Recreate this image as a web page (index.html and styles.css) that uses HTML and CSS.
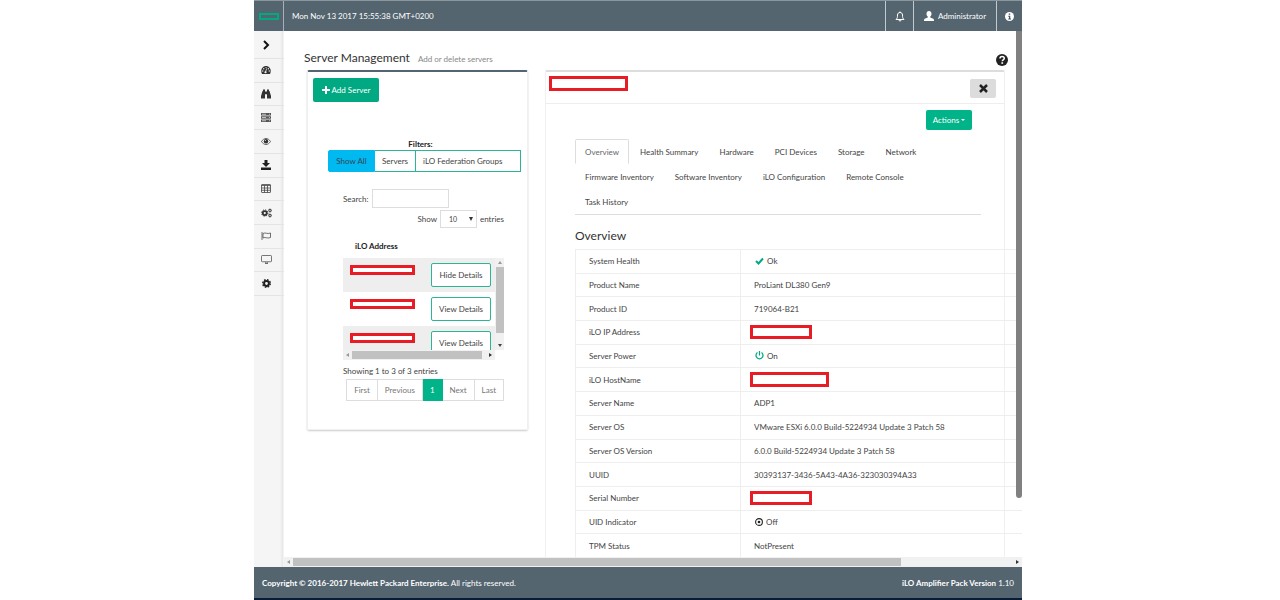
FILE: index.html
```html
<!DOCTYPE html>
<html lang="en">
  <head>
    <meta charset="UTF-8" />
    <title>iLO Amplifier Pack</title>
    <link rel="stylesheet" href="styles.css" />
  </head>
  <body>
    <div class="app">
      <header class="topbar">
        <a class="brand" href="#" aria-label="Home"><span class="brand-mark"></span></a>
        <span class="clock">Mon Nov 13 2017 15:55:38 GMT+0200</span>
        <button class="top-item" aria-label="Notifications">
          <svg width="10" height="11" viewBox="0 0 20 22" fill="none" stroke="currentColor" stroke-width="2">
            <path d="M2 17c3-3 3-5 3-9 0-3 2-5 5-5s5 2 5 5c0 4 0 6 3 9z" />
            <path d="M10 3V1M8 18c0 3 4 3 4 0" />
          </svg>
        </button>
        <button class="top-item top-user">
          <svg width="10" height="10" viewBox="0 0 20 20" fill="currentColor">
            <path d="M10 0c3.200 0 5 2.400 5 5.500 0 2.500-1 4.500-2.500 5.700V13l6 2.500c1 .5 1.500 1.500 1.500 4.500H0c0-3 .5-4 1.500-4.500l6-2.500v-1.800C6 10 5 8 5 5.500 5 2.400 6.800 0 10 0z" />
          </svg>
          Administrator
        </button>
        <button class="top-item top-info" aria-label="Info">
          <svg width="9" height="9" viewBox="0 0 18 18">
            <circle cx="9" cy="9" r="9" fill="#fff" />
            <path d="M7.500 3h3v2.500h-3zM6.500 7.500h4V13H12v2H6.500v-2H8V9.500H6.500z" fill="#425563" />
          </svg>
        </button>
      </header>

      <div class="body">
        <nav class="sidebar">
          <a href="#" aria-label="Expand">
            <svg width="8" height="10" viewBox="0 0 16 20" fill="none" stroke="#111" stroke-width="4"><path d="M4 2l8 8-8 8" /></svg>
          </a>
          <a href="#" aria-label="Dashboard">
            <svg width="10" height="8" viewBox="0 0 20 16">
              <path d="M2 16C-2 8 3 0 10 0s12 8 8 16z" fill="#333" />
              <path d="M9 12l2.500-7" stroke="#f5f5f5" stroke-width="1.500" />
              <g fill="#f5f5f5">
                <circle cx="3.500" cy="10" r="1.300" /><circle cx="5.500" cy="5.500" r="1.300" /><circle cx="10" cy="3" r="1.200" />
                <circle cx="14.800" cy="5.500" r="1.300" /><circle cx="16.500" cy="10" r="1.300" /><circle cx="9" cy="12.500" r="2.200" />
              </g>
            </svg>
          </a>
          <a href="#" aria-label="Discovery">
            <svg width="10" height="10" viewBox="0 0 20 20" fill="#333">
              <path d="M4 1h4v3h1v7H8v8H0v-5L3 4h1zM12 1h4v3h1l3 10v5h-8v-8h-1V4h1z" /><path d="M8 6h4v4H8z" />
            </svg>
          </a>
          <a href="#" aria-label="Servers">
            <svg width="10" height="9" viewBox="0 0 20 18" fill="#555">
              <path d="M0 0h20v5H0zM0 6.500h20v5H0zM0 13h20v5H0z" />
              <path d="M2 2.500h8M2 9h8M2 15.500h8M16 2.500h2M16 9h2M16 15.500h2" stroke="#eee" stroke-width="1.400" />
            </svg>
          </a>
          <a href="#" aria-label="Monitoring">
            <svg width="10" height="7" viewBox="0 0 20 14">
              <path d="M1 7c5-8 13-8 18 0-5 8-13 8-18 0z" fill="none" stroke="#444" stroke-width="1.600" />
              <circle cx="10" cy="6.500" r="4.400" fill="#333" /><circle cx="8.800" cy="5" r="1.200" fill="#ddd" />
            </svg>
          </a>
          <a href="#" aria-label="Downloads">
            <svg width="10" height="10" viewBox="0 0 20 20" fill="#222">
              <path d="M7 0h6v6h5l-8 8-8-8h5z" /><path d="M0 15h20v5H0z" />
            </svg>
          </a>
          <a href="#" aria-label="Reports">
            <svg width="10" height="9" viewBox="0 0 20 18" fill="none" stroke="#444" stroke-width="1.600">
              <rect x="1" y="1" width="18" height="16" rx="1" /><path d="M1 3h18M1 8h18M1 12.500h18M7 3v14M13 3v14" />
            </svg>
          </a>
          <a href="#" aria-label="Configuration">
            <svg width="11" height="10" viewBox="0 0 22 20" fill="none" stroke="#333">
              <circle cx="7.500" cy="10" r="4" stroke-width="3.500" /><circle cx="7.500" cy="10" r="6.300" stroke-width="2" stroke-dasharray="2.500 2.450" />
              <circle cx="18" cy="5" r="2.200" stroke-width="2" /><circle cx="18" cy="5" r="3.600" stroke-width="1" stroke-dasharray="1.500 1.300" />
              <circle cx="18" cy="15" r="2.200" stroke-width="2" /><circle cx="18" cy="15" r="3.600" stroke-width="1" stroke-dasharray="1.500 1.300" />
            </svg>
          </a>
          <a href="#" aria-label="Alerts">
            <svg width="10" height="8" viewBox="0 0 20 16" fill="none" stroke="#444" stroke-width="1.500">
              <path d="M2 0v16M4 3c5-3 8 2 15-1v9c-7 3-10-2-15 1z" />
            </svg>
          </a>
          <a href="#" aria-label="Console">
            <svg width="11" height="9" viewBox="0 0 22 18" fill="none" stroke="#555" stroke-width="1.600">
              <rect x="1" y="1" width="20" height="12.500" rx="1.500" /><path d="M8 17h6M9.500 14v3M12.500 14v3" />
            </svg>
          </a>
          <a href="#" aria-label="Settings">
            <svg width="9" height="9" viewBox="0 0 18 18" fill="none" stroke="#222">
              <circle cx="9" cy="9" r="4.800" stroke-width="4" /><circle cx="9" cy="9" r="7.500" stroke-width="3" stroke-dasharray="3.200 2.690" />
            </svg>
          </a>
        </nav>

        <main class="main">
          <div class="page-head">
            <h1>Server Management</h1>
            <small>Add or delete servers</small>
            <button class="help" aria-label="Help">
              <svg width="12" height="12" viewBox="0 0 24 24">
                <circle cx="12" cy="12" r="12" fill="#222" />
                <path d="M8 9c0-5.500 8.500-5 8.500-.5 0 3.500-4 3-4 6" fill="none" stroke="#fff" stroke-width="3" />
                <path d="M10.800 16.500h3.400v3.200h-3.400z" fill="#fff" />
              </svg>
            </button>
          </div>

          <div class="panels">
            <section class="panel panel-list">
              <button class="btn-green btn-add">
                <svg width="8" height="8" viewBox="0 0 16 16" fill="#fff"><path d="M6 0h4v6h6v4h-6v6H6v-6H0V6h6z" /></svg>
                Add Server
              </button>

              <div class="filters">
                <b>Filters:</b>
                <div class="filter-group">
                  <button class="active">Show All</button>
                  <button>Servers</button>
                  <button>iLO Federation Groups</button>
                </div>
              </div>

              <div class="list">
                <div class="search">
                  <label for="search">Search:</label>
                  <input id="search" type="text" />
                </div>
                <div class="length">
                  <label for="length">Show</label>
                  <span class="select">
                    <select id="length">
                      <option>10</option>
                      <option>25</option>
                    </select>
                  </span>
                  <span>entries</span>
                </div>

                <h2 class="list-head">iLO Address</h2>
                <div class="scroll-box">
                  <div class="rows">
                    <div class="row"><span class="mask mask-thin"></span><button>Hide Details</button></div>
                    <div class="row"><span class="mask mask-thin"></span><button>View Details</button></div>
                    <div class="row"><span class="mask mask-thin"></span><button>View Details</button></div>
                  </div>
                  <div class="vbar"><i class="up"></i><span class="thumb"></span><i class="down"></i></div>
                  <div class="hbar"><i class="left"></i><span class="thumb"></span><i class="right"></i></div>
                </div>

                <p class="info">Showing 1 to 3 of 3 entries</p>
                <div class="pager">
                  <a href="#">First</a>
                  <a href="#">Previous</a>
                  <a href="#" class="active">1</a>
                  <a href="#">Next</a>
                  <a href="#">Last</a>
                </div>
              </div>
            </section>

            <section class="panel panel-detail">
              <div class="detail-head">
                <span class="mask mask-lg"></span>
                <button class="close" aria-label="Close">
                  <svg width="9" height="9" viewBox="0 0 18 18" stroke="#222" stroke-width="5"><path d="M2 2l14 14M16 2L2 16" /></svg>
                </button>
              </div>
              <div class="detail-body">
                <button class="btn-green btn-actions">Actions<i class="caret"></i></button>
                <nav class="tabs">
                  <a href="#" class="active">Overview</a>
                  <a href="#">Health Summary</a>
                  <a href="#">Hardware</a>
                  <a href="#">PCI Devices</a>
                  <a href="#">Storage</a>
                  <a href="#">Network</a>
                  <a href="#">Firmware Inventory</a>
                  <a href="#">Software Inventory</a>
                  <a href="#">iLO Configuration</a>
                  <a href="#">Remote Console</a>
                  <a href="#">Task History</a>
                </nav>
                <h2>Overview</h2>
                <table class="overview">
                  <tr>
                    <th>System Health</th>
                    <td>
                      <svg class="icon" width="9" height="8" viewBox="0 0 18 16" fill="none" stroke="#01a982" stroke-width="4"><path d="M2 8l5 5 9-10" /></svg>
                      Ok
                    </td>
                  </tr>
                  <tr><th>Product Name</th><td>ProLiant DL380 Gen9</td></tr>
                  <tr><th>Product ID</th><td>719064-B21</td></tr>
                  <tr><th>iLO IP Address</th><td class="masked"><span class="mask mask-md"></span></td></tr>
                  <tr>
                    <th>Server Power</th>
                    <td>
                      <svg class="icon" width="9" height="9" viewBox="0 0 18 18" fill="none" stroke="#01a982" stroke-width="2.500"><path d="M5 3a7 7 0 1 0 8 0M9 0v9" /></svg>
                      On
                    </td>
                  </tr>
                  <tr><th>iLO HostName</th><td class="masked"><span class="mask mask-lg"></span></td></tr>
                  <tr><th>Server Name</th><td>ADP1</td></tr>
                  <tr><th>Server OS</th><td>VMware ESXi 6.0.0 Build-5224934 Update 3 Patch 58</td></tr>
                  <tr><th>Server OS Version</th><td>6.0.0 Build-5224934 Update 3 Patch 58</td></tr>
                  <tr><th>UUID</th><td>30393137-3436-5A43-4A36-323030394A33</td></tr>
                  <tr><th>Serial Number</th><td class="masked"><span class="mask mask-md"></span></td></tr>
                  <tr>
                    <th>UID Indicator</th>
                    <td>
                      <svg class="icon" width="8" height="8" viewBox="0 0 16 16"><circle cx="8" cy="8" r="6.800" fill="none" stroke="#222" stroke-width="2.200" /><circle cx="8" cy="8" r="2.600" fill="#222" /></svg>
                      Off
                    </td>
                  </tr>
                  <tr><th>TPM Status</th><td>NotPresent</td></tr>
                </table>
              </div>
            </section>
          </div>

          <div class="page-vbar"></div>
          <div class="hbar page-hbar"><i class="left"></i><span class="thumb"></span><i class="right"></i></div>
        </main>
      </div>

      <footer class="footer">
        <span><b>Copyright © 2016-2017 Hewlett Packard Enterprise.</b> All rights reserved.</span>
        <span><b>iLO Amplifier Pack Version</b> 1.10</span>
      </footer>
    </div>
  </body>
</html>
```
FILE: styles.css
```css
* {
  box-sizing: border-box;
}
body {
  margin: 0;
  padding-right: 4px;
  background: #fff;
  color: #444;
  font-family: Lato, "Liberation Sans", sans-serif;
  font-size: 8px;
  line-height: 12px;
}
button,
input,
select {
  font: inherit;
  color: inherit;
  margin: 0;
}
button {
  padding: 0;
  border: 0;
  background: none;
  white-space: nowrap;
  cursor: pointer;
}
a {
  color: inherit;
  text-decoration: none;
}
svg {
  display: block;
  flex: none;
}
h1,
h2,
p {
  margin: 0;
  font-weight: normal;
}

.app {
  width: 60vw;
  height: 100vh;
  margin: 0 auto;
  display: flex;
  flex-direction: column;
  border-bottom: 2px solid #0a1c35;
}

/* top bar */
.topbar {
  display: flex;
  align-items: stretch;
  height: 31px;
  flex: none;
  background: #546570;
  border-top: 1px solid #8b979f;
  color: #fff;
}
.brand {
  width: 30px;
  display: flex;
  align-items: center;
  justify-content: center;
  border-right: 1px solid #a5b0b7;
}
.brand-mark {
  width: 20px;
  height: 7px;
  border: 2px solid #01a982;
}
.clock {
  flex: 1;
  align-self: center;
  padding-left: 8px;
}
.top-item {
  display: flex;
  align-items: center;
  justify-content: center;
  gap: 4px;
  width: 28px;
  border-left: 1px solid #c3cacf;
}
.top-user {
  width: 83px;
}
.top-info {
  width: 26px;
}

.body {
  flex: 1;
  min-height: 0;
  display: flex;
}

/* side icons */
.sidebar {
  display: grid;
  grid-template-rows: 28px repeat(10, 1fr);
  width: 30px;
  height: 265px;
  flex: none;
}
.body {
  background: linear-gradient(to right, #f5f5f5 26px, #e6e6e6 29px, #fff 30px);
}
.sidebar a {
  padding-right: 6px;
  display: flex;
  align-items: center;
  justify-content: center;
  border-bottom: 1px solid #e4e4e4;
}

.main {
  flex: 1;
  min-width: 0;
  position: relative;
  overflow: hidden;
}
.page-head {
  display: flex;
  align-items: center;
  gap: 8px;
  height: 39px;
  padding: 14px 14px 0 20px;
}
.page-head h1 {
  font-size: 12px;
  line-height: 16px;
  color: #333;
}
.page-head small {
  font-size: 8px;
  color: #888;
  padding-top: 3px;
}
.help {
  margin-left: auto;
  padding-top: 4px;
}

.panels {
  display: flex;
  align-items: flex-start;
  gap: 17px;
  padding: 0 17px 0 23px;
}
.panel {
  border: 1px solid #f0f0f0;
  border-top: 2px solid #ddd;
  border-radius: 2px;
}
.panel-list {
  width: 221px;
  flex: none;
  padding: 6px 6px 28px 5px;
  border-top-color: #546570;
  box-shadow: 0 1px 2px #ccc;
}
.btn-green {
  display: flex;
  align-items: center;
  justify-content: center;
  background: #01a982;
  color: #fff;
  border-radius: 2px;
}
.btn-add {
  width: 66px;
  height: 24px;
  gap: 2px;
}

.filters {
  margin-top: 36px;
  padding-left: 15px;
  text-align: center;
}
.filters b {
  display: block;
  color: #222;
  padding-right: 8px;
}
.filter-group {
  display: flex;
}
.filter-group button {
  height: 22px;
  padding: 0 7px;
  border: 1px solid #2bb596;
  border-left-width: 0;
}
.filter-group button:last-child {
  flex: 1;
  text-align: left;
}
.filter-group .active {
  width: 47px;
  background: #00b9f1;
  border: 1px solid #00b9f1;
  border-radius: 2px 0 0 2px;
  color: #345;
}

.list {
  padding: 0 17px 0 30px;
  margin-top: 17px;
}
.search,
.length {
  display: flex;
  align-items: center;
  gap: 3px;
}
.search input {
  width: 77px;
  height: 19px;
  border: 1px solid #ddd;
  padding: 0 4px;
}
.length {
  margin-top: 2px;
  justify-content: flex-end;
}
.select {
  position: relative;
}
.select select {
  display: block;
  appearance: none;
  width: 37px;
  height: 18px;
  padding: 0 8px;
  border: 1px solid #ddd;
  border-radius: 0;
  background: #fff;
  font-size: 7px;
}
.select::after {
  content: "";
  position: absolute;
  right: 4px;
  top: 7px;
  border: 2px solid transparent;
  border-top: 4px solid #333;
  border-bottom: 0;
  pointer-events: none;
}
.list-head {
  margin-top: 12px;
  padding-left: 12px;
  font-size: 8px;
  line-height: 12px;
  font-weight: bold;
  color: #222;
}
.scroll-box {
  margin-top: 6px;
  display: grid;
  grid-template-columns: 1fr 9px;
  grid-template-rows: 92px 10px;
}
.rows {
  overflow: hidden;
}
.row {
  display: flex;
  align-items: flex-start;
  justify-content: space-between;
  height: 34px;
  padding: 5px 4px 0 7px;
}
.row:nth-child(odd) {
  background: #eee;
}
.row .mask {
  margin-top: 2px;
}
.row button {
  width: 60px;
  height: 24px;
  border: 1px solid #2bb596;
  border-radius: 2px;
  background: #fff;
}

/* boxes over hidden values */
.mask {
  display: block;
  border: 3px solid #e81c25;
  background: #fff;
}
.mask-thin {
  width: 65px;
  height: 10px;
}
.mask-md {
  width: 62px;
  height: 14px;
}
.mask-lg {
  width: 79px;
  height: 15px;
}

/* scroll bars */
.vbar,
.hbar {
  display: flex;
  align-items: center;
  gap: 3px;
  background: #f1f1f1;
}
.vbar {
  flex-direction: column;
  padding: 3px 0;
}
.hbar {
  padding: 0 3px;
}
.vbar .thumb {
  width: 8px;
  height: 66px;
  margin-bottom: auto;
  background: #c1c1c1;
}
.hbar .thumb {
  width: 130px;
  height: 8px;
  margin-right: auto;
  background: #c1c1c1;
}
.vbar i,
.hbar i {
  border: 0 solid transparent;
}
.vbar i {
  border-width: 0 2px;
}
.hbar i {
  border-width: 2px 0;
}
.vbar .up {
  border-bottom: 3px solid #999;
}
.vbar .down {
  border-top: 3px solid #444;
}
.hbar .left {
  border-right: 3px solid #999;
}
.hbar .right {
  border-left: 3px solid #333;
}

.info {
  margin-top: 5px;
}
.pager {
  display: flex;
  justify-content: flex-end;
  margin-top: 2px;
  color: #777;
}
.pager a {
  height: 22px;
  padding: 4px 7px;
  border: 1px solid #ddd;
  border-left-width: 0;
}
.pager a:first-child {
  border-left-width: 1px;
}
.pager .active {
  background: #00b388;
  border-color: #00b388;
  color: #fff;
}

/* server details */
.panel-detail {
  flex: 1;
  min-width: 0;
}
.detail-head {
  display: flex;
  align-items: flex-start;
  justify-content: space-between;
  height: 32px;
  padding: 4px 8px 0 3px;
  border-bottom: 1px solid #eee;
}
.close {
  display: flex;
  align-items: center;
  justify-content: center;
  width: 26px;
  height: 19px;
  margin-top: 3px;
  border-radius: 2px;
  background: #dcdcdc;
}
.detail-body {
  padding: 6px 23px 24px 29px;
}
.btn-actions {
  width: 46px;
  height: 20px;
  gap: 2px;
  margin: 0 9px 9px auto;
  background: #00b388;
}
.caret {
  border: 2px solid transparent;
  border-top-color: #fff;
  border-bottom: 0;
}
.tabs {
  display: flex;
  flex-wrap: wrap;
  column-gap: 1px;
  padding-right: 8px;
  border-bottom: 1px solid #ddd;
}
.tabs a {
  height: 25px;
  padding: 6px 9px;
  border: 1px solid transparent;
}
.tabs .active {
  border-color: #ddd #ddd transparent;
  border-radius: 2px 2px 0 0;
  color: #666;
}
.detail-body h2 {
  margin: 13px 0 5px;
  font-size: 12px;
  line-height: 16px;
  color: #333;
}
.overview {
  width: 120%;
  height: 309px;
  border-collapse: collapse;
}
.overview th,
.overview td {
  padding: 0 12px 0 13px;
  border: 1px solid #eee;
  text-align: left;
  font-weight: normal;
}
.overview th {
  width: 165px;
}
.overview .masked {
  padding-left: 9px;
}
.overview .mask {
  margin: -2px 0;
}
.icon {
  display: inline-block;
  vertical-align: -1px;
  margin: 0 1px;
}

.page-vbar {
  position: absolute;
  top: 0;
  right: 0;
  width: 6px;
  height: 467px;
  background: #808080;
  border-radius: 0 0 3px 3px;
}
.page-hbar {
  position: absolute;
  left: 0;
  right: 0;
  bottom: 0;
  height: 10px;
  padding: 0 3px;
}
.page-hbar .thumb {
  width: 83%;
}

.footer {
  flex: none;
  display: flex;
  align-items: center;
  justify-content: space-between;
  height: 31px;
  padding: 0 8px;
  background: #546570;
  color: #fff;
}
```
